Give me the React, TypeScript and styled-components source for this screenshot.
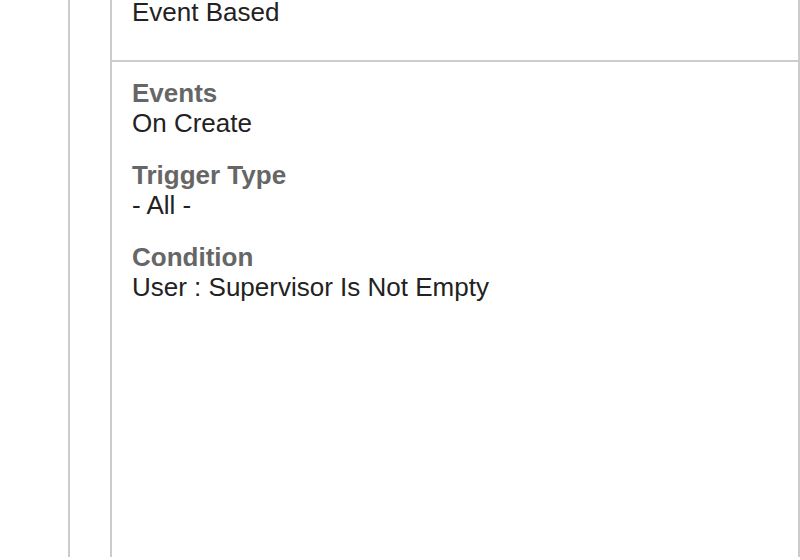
import styled, { createGlobalStyle } from 'styled-components';

const GlobalStyle = createGlobalStyle`
  html, body {
    margin: 0;
    padding: 0;
    background: #fff;
    overflow: hidden;
  }
  body {
    font-family: "Liberation Sans", Arial, sans-serif;
  }
`;

const Page = styled.div`
  height: 100vh;
  min-height: 560px;
  margin-left: 68px;
  padding-left: 40px;
  border-left: 2px solid #cccccc;
  box-sizing: border-box;
`;

const Card = styled.div`
  height: 100%;
  border-left: 2px solid #cccccc;
  border-right: 2px solid #cccccc;
  box-sizing: border-box;
`;

const Section = styled.div<{ $first?: boolean }>`
  padding: ${(p) => (p.$first ? '0 20px 33px' : '16px 20px')};
  margin-top: ${(p) => (p.$first ? '-3px' : '0')};
  border-bottom: ${(p) => (p.$first ? '2px solid #cccccc' : 'none')};
`;

const Field = styled.div`
  margin-bottom: 22px;
`;

const Label = styled.div`
  font-size: 26px;
  line-height: 30px;
  font-weight: bold;
  color: #666666;
`;

const Value = styled.div`
  font-size: 26px;
  line-height: 30px;
  color: #222222;
`;

const fields = [
  { label: 'Events', value: 'On Create' },
  { label: 'Trigger Type', value: '- All -' },
  { label: 'Condition', value: 'User : Supervisor Is Not Empty' },
];

const App: React.FC = () => {
  return (
    <>
      <GlobalStyle />
      <Page>
        <Card>
          <Section $first>
            <Value>Event Based</Value>
          </Section>
          <Section>
            {fields.map((f) => (
              <Field key={f.label}>
                <Label>{f.label}</Label>
                <Value>{f.value}</Value>
              </Field>
            ))}
          </Section>
        </Card>
      </Page>
    </>
  );
};

export default App;
